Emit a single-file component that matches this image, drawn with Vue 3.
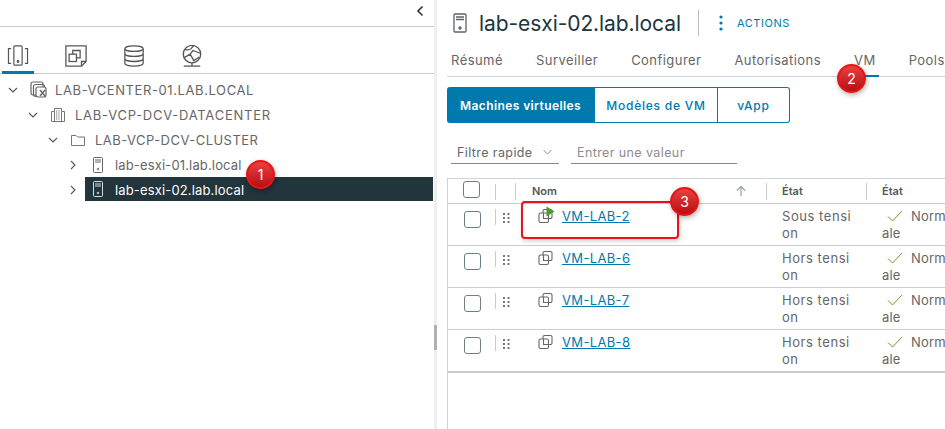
<script setup>
const tree = [
  { label: 'LAB-VCENTER-01.LAB.LOCAL', depth: 0, open: true, icon: 'vc' },
  { label: 'LAB-VCP-DCV-DATACENTER', depth: 1, open: true, icon: 'dc' },
  { label: 'LAB-VCP-DCV-CLUSTER', depth: 2, open: true, icon: 'folder' },
  { label: 'lab-esxi-01.lab.local', depth: 3, open: false, icon: 'host' },
  { label: 'lab-esxi-02.lab.local', depth: 3, open: false, icon: 'host', selected: true },
]
const tabs = ['Résumé', 'Surveiller', 'Configurer', 'Autorisations', 'VM', 'Pools']
const rows = [
  { name: 'VM-LAB-2', state: 'Sous tension', on: true },
  { name: 'VM-LAB-6', state: 'Hors tension' },
  { name: 'VM-LAB-7', state: 'Hors tension' },
  { name: 'VM-LAB-8', state: 'Hors tension' },
]
</script>

<template>
  <div class="page">
    <aside class="nav">
      <div class="collapse">
        <svg width="10" height="12" viewBox="0 0 10 12"><path d="M7.5 1.5 3 6l4.500 4.500" fill="none" stroke="#333" stroke-width="1.600"/></svg>
      </div>
      <div class="nav-tabs">
        <div class="nav-tab active">
          <svg width="22" height="22" viewBox="0 0 24 24" fill="none" stroke="#565656" stroke-width="1.300"><rect x="7.500" y="1" width="9" height="21" rx="1"/><path d="M4.500 4H1.600v16h2.900M19.500 4h2.900v16h-2.900"/><circle cx="12" cy="18" r=".9" fill="#565656"/></svg>
        </div>
        <div class="nav-tab">
          <svg width="22" height="22" viewBox="0 0 24 24" fill="none" stroke="#565656" stroke-width="1.400"><path d="M1 1h22v17l-5 5H1z"/><path d="M18 23v-5h5"/><rect x="4.500" y="10" width="8" height="8"/><path d="M8.500 10V6h8v8h-4"/></svg>
        </div>
        <div class="nav-tab">
          <svg width="22" height="22" viewBox="0 0 24 24" fill="none" stroke="#565656" stroke-width="1.400"><ellipse cx="12" cy="4" rx="10" ry="3"/><path d="M2 4v16c0 1.700 4.500 3 10 3s10-1.300 10-3V4M2 9.500c0 1.700 4.500 3 10 3s10-1.300 10-3M2 15c0 1.700 4.500 3 10 3s10-1.300 10-3"/></svg>
        </div>
        <div class="nav-tab">
          <svg width="22" height="22" viewBox="0 0 24 24" fill="none" stroke="#565656" stroke-width="1.400"><circle cx="12" cy="10" r="9.500"/><path d="M4 5c3 .5 5 1 7-1l3-3.500M3 14l7-4 4 7 6-4M10 10l3-4 8 3"/><path d="M3 23h18"/><path d="M12 19.500V23"/></svg>
        </div>
      </div>
      <ul class="tree">
        <li v-for="n in tree" :key="n.label" class="tree-row" :class="['depth-' + n.depth, { selected: n.selected }]">
          <svg class="caret" width="10" height="10" viewBox="0 0 10 10" fill="none" stroke="currentColor" stroke-width="1.100">
            <path v-if="n.open" d="M1 3l4 4 4-4"/>
            <path v-else d="M3 1l4 4-4 4"/>
          </svg>
          <span class="tree-item" :class="{ sel: n.selected }">
            <svg v-if="n.icon === 'vc'" class="ticon" width="18" height="18" viewBox="0 0 18 18" fill="none" stroke="#666" stroke-width="1.200"><rect x="1" y="1" width="12" height="13" rx="2"/><rect x="3.500" y="3.500" width="11" height="12" rx="2"/><rect x="6" y="6" width="10" height="10" rx="2" fill="#fff"/><path d="M10 9l5 6M15 9l-5 6" stroke-width="1.400"/></svg>
            <svg v-else-if="n.icon === 'dc'" class="ticon" width="14" height="14" viewBox="0 0 14 14" fill="none" stroke="#777" stroke-width="1"><path d="M.5 13.500V3.500h3V.5h7v3h3v10z"/><path d="M3.500 3.500v10M10.500 3.500v10"/><path d="M5 3h4M5 5h4M5 7h4M5 9h4M5 11h4" stroke-dasharray="1 .7"/></svg>
            <svg v-else-if="n.icon === 'folder'" class="ticon" width="14" height="12" viewBox="0 0 14 12" fill="none" stroke="#777" stroke-width="1"><path d="M.5 11.500V1.500h4.500l1.500 1.500h7v8.500z"/></svg>
            <svg v-else class="ticon host" width="10" height="16" viewBox="0 0 10 16" fill="none" :stroke="n.selected ? '#d8dde0' : '#666'" stroke-width="1"><rect x=".5" y=".5" width="9" height="15" rx="1"/><path d="M2 3h6M2 5h6"/><circle cx="5" cy="12" r=".8"/></svg>
            <span class="tlabel">{{ n.label }}</span>
          </span>
        </li>
      </ul>
    </aside>

    <div class="splitter"><i></i></div>

    <main class="main">
      <header class="head">
        <svg width="14" height="20" viewBox="0 0 14 20" fill="none" stroke="#5f6468" stroke-width="1.300"><rect x="1" y="1" width="12" height="18" rx="1"/><path d="M3 4h8M3 6.500h8" /><circle cx="7" cy="15" r="1" fill="#5f6468"/></svg>
        <h1>lab-esxi-02.lab.local</h1>
        <span class="vline"></span>
        <svg class="kebab" width="4" height="16" viewBox="0 0 4 16" fill="#0079ad"><circle cx="2" cy="2" r="1.600"/><circle cx="2" cy="8" r="1.600"/><circle cx="2" cy="14" r="1.600"/></svg>
        <span class="actions">ACTIONS</span>
      </header>

      <nav class="tabs">
        <span v-for="t in tabs" :key="t" class="tab" :class="{ on: t === 'VM' }">{{ t }}</span>
      </nav>

      <div class="btns">
        <span class="btn first">Machines virtuelles</span>
        <span class="btn second">Modèles de VM</span>
        <span class="btn third">vApp</span>
      </div>

      <div class="filters">
        <div class="select">
          <span>Filtre rapide</span>
          <svg width="9" height="6" viewBox="0 0 9 6" fill="none" stroke="#8a9298" stroke-width="1"><path d="M.5 1l4 4 4-4"/></svg>
        </div>
        <div class="input">Entrer une valeur</div>
      </div>

      <section class="table">
        <div class="tr th">
          <div class="c-check"><span class="box"></span></div>
          <div class="c-drag"></div>
          <div class="c-name">
            <span>Nom</span>
            <svg width="12" height="12" viewBox="0 0 12 12" fill="none" stroke="#9aa0a4" stroke-width="1.200"><path d="M6 11V1.500M1.800 5.500 6 1.500l4.200 4"/></svg>
          </div>
          <div class="c-state"><span>État</span></div>
          <div class="c-health"><span>État</span></div>
        </div>
        <div v-for="r in rows" :key="r.name" class="tr">
          <div class="c-check"><span class="box"></span></div>
          <div class="c-drag">
            <svg width="7" height="10" viewBox="0 0 7 10" fill="#777"><rect width="2" height="2"/><rect x="4.500" width="2" height="2"/><rect y="4" width="2" height="2"/><rect x="4.500" y="4" width="2" height="2"/><rect y="8" width="2" height="2"/><rect x="4.500" y="8" width="2" height="2"/></svg>
          </div>
          <div class="c-name">
            <svg class="vm" width="16" height="16" viewBox="0 0 16 16" fill="none" stroke="#666" stroke-width="1.100">
              <path d="M5 5V3a1.500 1.500 0 0 1 1.500-1.500h6A1.500 1.500 0 0 1 14 3v6a1.500 1.500 0 0 1-1.500 1.500H10.500"/>
              <rect x="1" y="5" width="9.500" height="9.500" rx="1.500"/>
              <path d="M5.500 5v5.500h5" />
              <path v-if="r.on" d="M8.500-1.500l8 5-8 5z" fill="#4a9c2d" stroke="none"/>
            </svg>
            <a>{{ r.name }}</a>
          </div>
          <div class="c-state text">{{ r.state }}</div>
          <div class="c-health text">
            <svg width="16" height="12" viewBox="0 0 16 12" fill="none" stroke="#62a420" stroke-width="1"><path d="M1 6.500l4.500 4.500L15 1"/></svg>Normale
          </div>
        </div>
      </section>
    </main>

    <span class="badge b1">1</span>
    <span class="badge b2">2</span>
    <span class="badge b3">3</span>
    <span class="mark"></span>
  </div>
</template>

<style>
html, body { margin: 0; background: #fff; overflow: hidden; }
</style>

<style scoped>
.page {
  position: relative;
  display: flex;
  width: 945px;
  height: 429px;
  overflow: hidden;
  background: #fff;
  font-family: Inter, "Liberation Sans", sans-serif;
  color: #666;
}
.nav { width: 434px; flex: none; }
.collapse {
  display: flex;
  justify-content: flex-end;
  align-items: flex-start;
  padding: 5px 9px 0 0;
  box-sizing: border-box;
  border-bottom: 1px solid #ccc;
  height: 27px;
}
.nav-tabs {
  display: flex;
  height: 47px;
  border-bottom: 1px solid #ccc;
  box-sizing: border-box;
  padding-left: 2px;
  gap: 26px;
}
.nav-tab {
  width: 32px;
  height: 47px;
  box-sizing: border-box;
  display: flex;
  justify-content: center;
  padding-top: 18px;
  flex: none;
}
.nav-tab svg { display: block; }
.nav-tab.active { border-bottom: 3px solid #0079ad; }
.tree { list-style: none; margin: 3px 0 0; padding: 0; }
.tree-row {
  display: flex;
  align-items: center;
  height: 25px;
  font-size: 13px;
  white-space: nowrap;
}
.caret { flex: none; margin-right: 13px; color: #555; }
.depth-0 { padding-left: 8px; letter-spacing: .6px; }
.depth-0 .caret { margin-right: 12px; }
.depth-1 { padding-left: 28px; letter-spacing: .75px; }
.depth-2 { padding-left: 48px; letter-spacing: .47px; }
.depth-3 { padding-left: 68px; letter-spacing: .15px; }
.depth-3 .caret { margin-right: 7px; }
.tree-item { display: flex; align-items: center; gap: 10px; flex: 1; height: 24px; }
.depth-0 .tree-item { gap: 7px; }
.depth-3 .tree-item { padding-left: 8px; gap: 12px; }
.sel { background: #22343c; color: #fff; margin-right: 1px; align-self: flex-start; }
.sel .tlabel { padding-top: 2px; }
.ticon { flex: none; }

.splitter {
  position: relative;
  width: 13px;
  flex: none;
}
.splitter::before {
  content: "";
  position: absolute;
  left: 0; top: 0; bottom: 0;
  width: 3px;
  background: #eee;
}
.splitter i {
  position: absolute;
  left: 0;
  top: 325px;
  width: 3px;
  height: 25px;
  background: #b0b0b0;
}

.main { flex: 1; min-width: 0; }
.head {
  display: flex;
  align-items: center;
  height: 46px;
  padding-left: 6px;
}
.head h1 {
  margin: 0 0 0 12px;
  font-size: 21px;
  font-weight: 400;
  letter-spacing: -.08px;
  color: #22343c;
  white-space: nowrap;
  width: 219px;
}
.vline { width: 1px; height: 26px; background: #bbb; }
.kebab { margin-left: 20px; }
.actions {
  margin-left: 14px;
  font-size: 11px;
  letter-spacing: .55px;
  color: #0079ad;
  font-weight: 400;
}
.tabs {
  display: flex;
  height: 31px;
  border-bottom: 1px solid #ccd2d8;
  padding-left: 4px;
  gap: 33px;
  white-space: nowrap;
  box-sizing: border-box;
  font-size: 13px;
  letter-spacing: .45px;
}
.tab { height: 31px; line-height: 28px; box-sizing: border-box; flex: none; color: #666; }
.tab.on { border-bottom: 2px solid #0079ad; padding: 0 3px 0 0; margin-right: -3px; }
.btns {
  display: flex;
  margin-top: 10px;
  height: 36px;
  width: 343px;
  font-size: 12px;
  font-weight: 500;
  letter-spacing: .75px;
  color: #0079ad;
}
.btn {
  display: flex;
  align-items: center;
  justify-content: center;
  box-sizing: border-box;
  border: 1px solid #0079ad;
  border-left: 0;
}
.first { width: 148px; background: #0079ad; color: #fff; border-radius: 3px 0 0 3px; font-weight: 600; letter-spacing: .4px; }
.second { width: 123px; }
.third { width: 72px; border-radius: 0 3px 3px 0; }
.filters {
  display: flex;
  gap: 12px;
  margin-top: 17px;
  margin-left: 4px;
  font-size: 12.500px;
  letter-spacing: .4px;
}
.select, .input {
  height: 24px;
  border-bottom: 1px solid #7d8a92;
  box-sizing: border-box;
  line-height: 25px;
  white-space: nowrap;
}
.select { width: 108px; padding-left: 6px; color: #666; display: flex; align-items: center; gap: 10px; }
.select span { padding-top: 2px; }
.input { width: 166px; padding-left: 6px; color: #8c8c8c; }
.table {
  margin-top: 14px;
  height: 260px;
  border-top: 1px solid #ccd4d8;
  border-left: 1px solid #ccd4d8;
  box-sizing: border-box;
}
.tr {
  display: grid;
  grid-template-columns: 47px 20px 251px 100px 1fr;
  height: 42px;
  box-sizing: border-box;
  border-bottom: 1px solid #ccc;
  font-size: 13px;
}
.tr:last-child { height: 43px; border-bottom-width: 2px; }
.th { height: 25px; font-size: 11px; font-weight: 600; color: #565656; }
.th > div { padding-top: 5px; }
.c-check { display: flex; justify-content: center; padding-top: 7px; box-sizing: border-box; }
.th > .c-check { padding-top: 2px; padding-right: 2px; }
.box {
  width: 15px;
  height: 15px;
  border: 1px solid #6f7f88;
  border-radius: 3px;
  display: block;
  box-sizing: content-box;
  margin-left: 2px;
}
.c-drag { position: relative; padding: 9px 0 0 8px; box-sizing: border-box; }
.c-drag::before {
  content: "";
  position: absolute;
  left: 0;
  top: 5px;
  width: 1px;
  height: 16px;
  background: #ccc;
}
.c-drag svg { display: block; }
.c-name {
  position: relative;
  display: flex;
  align-items: flex-start;
  padding: 3px 0 0 23px;
  gap: 8px;
  box-sizing: border-box;
  color: #0079ad;
}
.th > .c-name { color: #565656; padding: 0 19px 0 17px; justify-content: space-between; align-items: center; height: 24px; }
.th > .c-name::before {
  content: "";
  position: absolute;
  left: 0;
  top: 4px;
  width: 1px;
  height: 17px;
  background: #ccc;
}
.vm { flex: none; margin-top: 1px; overflow: visible; }
a { text-decoration: underline; color: #0079ad; font-size: 13px; letter-spacing: .35px; line-height: 18px; }
.c-state, .c-health { position: relative; box-sizing: border-box; padding-left: 16px; }
.th > .c-state::before, .th > .c-health::before {
  content: "";
  position: absolute;
  left: 0;
  top: 4px;
  width: 1px;
  height: 17px;
  background: #ccc;
}
.text { padding-top: 4px; line-height: 17px; color: #666; word-break: break-all; }
.c-state.text { width: 88px; letter-spacing: .55px; }
.c-health svg { margin: 0 8px 0 5px; vertical-align: -1px; }
.c-health.text { width: 86px; letter-spacing: .2px; }

.badge {
  position: absolute;
  width: 29px;
  height: 29px;
  border-radius: 50%;
  background: linear-gradient(#e94040, #b80f14);
  border: 2px solid #e81414;
  box-sizing: border-box;
  box-shadow: 1px 2px 5px rgba(0, 0, 0, .3);
  color: #fff;
  font-size: 14px;
  display: flex;
  align-items: center;
  justify-content: center;
  z-index: 2;
}
.b1 { left: 246px; top: 160px; }
.b2 { left: 837px; top: 64px; }
.b3 { left: 670px; top: 187px; }
.mark {
  position: absolute;
  left: 521px;
  top: 201px;
  width: 158px;
  height: 38px;
  border: 2px solid #e8141c;
  border-radius: 4px;
  box-sizing: border-box;
  box-shadow: 1px 2px 4px rgba(0, 0, 0, .2);
  z-index: 1;
}
</style>
